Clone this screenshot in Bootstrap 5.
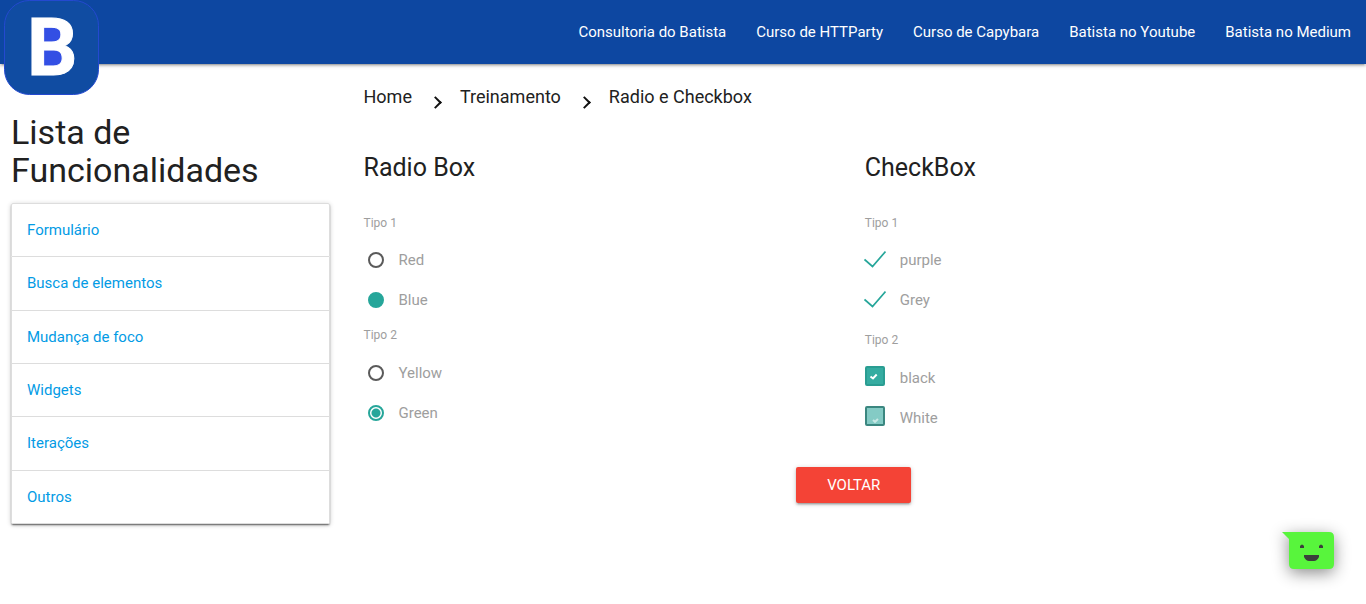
<!DOCTYPE html>
<html lang="pt-BR">
<head>
<meta charset="utf-8">
<meta name="viewport" content="width=device-width, initial-scale=1">
<title>Radio e Checkbox</title>
<link href="https://cdn.jsdelivr.net/npm/bootstrap@5.3.0/dist/css/bootstrap.min.css" rel="stylesheet">
<style>
  :root {
    --teal: #26a69a;
    --depth: 0 2px 2px 0 rgba(0,0,0,.14), 0 3px 1px -2px rgba(0,0,0,.12), 0 1px 5px 0 rgba(0,0,0,.2);
  }
  body { font-family: Roboto, "Liberation Sans", sans-serif; font-size: 15px; line-height: 22px; color: #212121; }
  .top-bar { background: #0d47a1; height: 64px; box-shadow: var(--depth); }
  .top-bar .nav-link { color: #fff; padding: 0 15px; line-height: 64px; }
  .brand { left: 4px; top: 0; line-height: 0; }
  .gutter { padding-left: 11px; padding-right: 11px; }
  .side { padding: 0 12px 20px 11px; }
  .side-title { font-size: 34px; line-height: 38px; font-weight: 400; margin: 49px 0 14px; }
  .menu { --bs-list-group-border-color: #ddd; --bs-list-group-border-radius: 2px; min-height: 321px; box-shadow: 0 1px 1px 0 rgba(0,0,0,.3), var(--depth); }
  .menu .list-group-item { color: #039be5; padding: 0 15px; display: flex; align-items: center; flex: 1 0 auto; }
  .crumbs { font-size: 18px; line-height: 24px; padding-top: 21px; }
  .crumbs a { color: inherit; text-decoration: none; }
  .crumbs li { display: flex; }
  .crumbs li + li::before { content: ""; width: 9px; height: 9px; border: solid #111; border-width: 2px 2px 0 0; transform: rotate(45deg); margin: 13px 20px 0 19px; }
  .group-title { font-size: 25px; line-height: 28px; font-weight: 400; margin: 45px 0 32px; }
  .choices legend { font-size: 12px; line-height: 18px; color: #9e9e9e; float: none; margin: 0 0 8px; }
  .choices + .choices { margin-top: 6px; }
  .choices + .choices legend { margin-bottom: 9px; }
  .choices + .choices.roomy { margin-top: 11px; }
  .choice { display: flex; align-items: center; height: 40px; }
  .choice label { color: #9e9e9e; }
  .choice input { appearance: none; flex: none; margin: 0; background: center / 100% no-repeat; }
  .choice input[type=radio] { width: 16px; height: 16px; margin: 0 15px 0 4px; border: 2px solid #5a5a5a; border-radius: 50%; }
  .choice input[type=radio]:checked { border-color: var(--teal); background: radial-gradient(circle, var(--teal) 4px, transparent 5px); }
  .choice input[type=radio].solid:checked { background: var(--teal); }
  .choice .tick { width: 22px; height: 18px; margin: 0 14px 2px -1px; background-image: url("data:image/svg+xml,%3Csvg xmlns='http://www.w3.org/2000/svg' viewBox='0 0 22 18'%3E%3Cpath d='M.5 9.5 8.500 16.500 21.500 1.500' fill='none' stroke='%2326a69a' stroke-width='1.700'/%3E%3C/svg%3E"); }
  .choice .boxed { width: 20px; height: 20px; margin: 0 15px 4px 0; border: 2px solid #2a9d92; border-radius: 2px; background-color: #35aca1; background-image: url("data:image/svg+xml,%3Csvg xmlns='http://www.w3.org/2000/svg' viewBox='0 0 16 16'%3E%3Cpath d='M3.500 8.500 6 10.500 9.700 6.500' fill='none' stroke='white' stroke-width='2'/%3E%3C/svg%3E"); }
  .choice .pale { border-color: #3b8780; background-color: #84cbc5; background-image: url("data:image/svg+xml,%3Csvg xmlns='http://www.w3.org/2000/svg' viewBox='0 0 16 16'%3E%3Cpath d='M6 12 8 13.800 11 11' fill='none' stroke='%23c8e8e5' stroke-width='2'/%3E%3C/svg%3E"); }
  .back { background: #f44336; color: #fff; border: 0; border-radius: 2px; height: 36px; padding: 0 31px; font-size: 15px; line-height: 36px; box-shadow: var(--depth); margin-top: 29px; }
  .back:hover { background: #f55a4e; color: #fff; }
  .chat { right: 32px; bottom: 34px; padding: 0; border: 0; background: none; line-height: 0; filter: drop-shadow(0 4px 8px rgba(0,0,0,.45)); }
</style>
</head>
<body>
<nav class="top-bar position-relative d-flex justify-content-end">
  <a class="brand position-absolute" href="#" aria-label="Batista">
    <svg width="95" height="95" viewBox="0 0 95 95">
      <rect x=".5" y=".5" width="94" height="94" rx="25" fill="#104ca2" stroke="#2449d0"/>
      <path d="M36 26h22v42H36z" fill="#334fe4"/>
      <text x="23" y="75" font-family="Roboto, sans-serif" font-size="79" font-weight="700" fill="#fff" stroke="#fff">B</text>
    </svg>
  </a>
  <ul class="nav flex-nowrap">
    <li class="nav-item"><a class="nav-link" href="#">Consultoria do Batista</a></li>
    <li class="nav-item"><a class="nav-link" href="#">Curso de HTTParty</a></li>
    <li class="nav-item"><a class="nav-link" href="#">Curso de Capybara</a></li>
    <li class="nav-item"><a class="nav-link" href="#">Batista no Youtube</a></li>
    <li class="nav-item"><a class="nav-link" href="#">Batista no Medium</a></li>
  </ul>
</nav>

<div class="container-fluid p-0">
  <div class="row g-0">
    <aside class="col-3 side">
      <h4 class="side-title">Lista de Funcionalidades</h4>
      <div class="list-group menu">
        <a class="list-group-item" href="#">Formulário</a>
        <a class="list-group-item" href="#">Busca de elementos</a>
        <a class="list-group-item" href="#">Mudança de foco</a>
        <a class="list-group-item" href="#">Widgets</a>
        <a class="list-group-item" href="#">Iterações</a>
        <a class="list-group-item" href="#">Outros</a>
      </div>
    </aside>

    <main class="col-9 gutter">
      <ol class="crumbs gutter list-unstyled d-flex m-0">
        <li><a href="#">Home</a></li>
        <li><a href="#">Treinamento</a></li>
        <li><a href="#">Radio e Checkbox</a></li>
      </ol>
      <div class="row g-0">
        <section class="col-6 gutter">
          <h5 class="group-title">Radio Box</h5>
          <fieldset class="choices">
            <legend>Tipo 1</legend>
            <div class="choice"><input type="radio" name="cor1" id="red"><label for="red">Red</label></div>
            <div class="choice"><input class="solid" type="radio" name="cor1" id="blue" checked><label for="blue">Blue</label></div>
          </fieldset>
          <fieldset class="choices">
            <legend>Tipo 2</legend>
            <div class="choice"><input type="radio" name="cor2" id="yellow"><label for="yellow">Yellow</label></div>
            <div class="choice"><input type="radio" name="cor2" id="green" checked><label for="green">Green</label></div>
          </fieldset>
        </section>
        <section class="col-6 gutter">
          <h5 class="group-title">CheckBox</h5>
          <fieldset class="choices">
            <legend>Tipo 1</legend>
            <div class="choice"><input class="tick" type="checkbox" id="purple" checked><label for="purple">purple</label></div>
            <div class="choice"><input class="tick" type="checkbox" id="grey" checked><label for="grey">Grey</label></div>
          </fieldset>
          <fieldset class="choices roomy">
            <legend>Tipo 2</legend>
            <div class="choice"><input class="boxed" type="checkbox" id="black" checked><label for="black">black</label></div>
            <div class="choice"><input class="boxed pale" type="checkbox" id="white" checked><label for="white">White</label></div>
          </fieldset>
        </section>
      </div>
      <div class="text-center"><button class="btn back" type="button">VOLTAR</button></div>
    </main>
  </div>
</div>

<button class="chat position-fixed" type="button" aria-label="Chat">
  <svg width="52" height="38" viewBox="0 0 52 38">
    <path d="M0 0h47q5 0 5 5v27q0 5-5 5H12q-5 0-5-5V7Z" fill="#58f53c"/>
    <path d="M18 16v-2q2-3 4 0v2zM37 16v-2q2-3 4 0v2zM22 23h15v2q-2 4-5 4h-5q-3 0-5-4Z" fill="#3b3f3b"/>
  </svg>
</button>
<script src="https://cdn.jsdelivr.net/npm/bootstrap@5.3.0/dist/js/bootstrap.bundle.min.js"></script>
</body>
</html>
